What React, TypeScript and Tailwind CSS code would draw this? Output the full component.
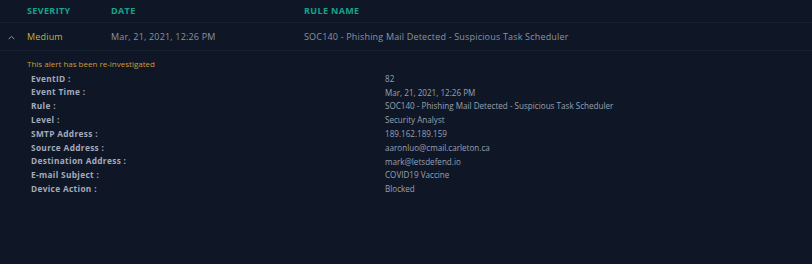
export default function App() {
  const details: [string, string][] = [
    ["EventID :", "82"],
    ["Event Time :", "Mar, 21, 2021, 12:26 PM"],
    ["Rule :", "SOC140 - Phishing Mail Detected - Suspicious Task Scheduler"],
    ["Level :", "Security Analyst"],
    ["SMTP Address :", "189.162.189.159"],
    ["Source Address :", "aaronluo@cmail.carleton.ca"],
    ["Destination Address :", "mark@letsdefend.io"],
    ["E-mail Subject :", "COVID19 Vaccine"],
    ["Device Action :", "Blocked"],
  ]

  return (
    <div className="w-[812px] h-[264px] bg-[#0f1727] font-['Open_Sans',sans-serif] overflow-hidden">
      {/* Header */}
      <div className="flex items-center h-[23px] pl-[27px] border-b border-[#18212f] text-[9px] font-bold tracking-[0.04em] text-[#13a58c]">
        <div className="w-[84px]">SEVERITY</div>
        <div className="w-[193px]">DATE</div>
        <div>RULE NAME</div>
      </div>

      {/* Row */}
      <div className="flex items-center h-[28px] pt-[1px] border-b border-[#18212f] text-[9px] tracking-[0.02em]">
        <div className="w-[27px] flex pl-[8px]">
          <svg width="7" height="5" viewBox="0 0 7 5" fill="none">
            <path d="M0.7 4.2 L3.5 1.2 L6.3 4.2" stroke="#8b93a5" strokeWidth="1" />
          </svg>
        </div>
        <div className="w-[84px] text-[#bdb43a]">Medium</div>
        <div className="w-[193px] text-[#8a92a4]">Mar, 21, 2021, 12:26 PM</div>
        <div className="text-[#8a92a4]">SOC140 - Phishing Mail Detected - Suspicious Task Scheduler</div>
      </div>

      {/* Details */}
      <div className="pl-[27px] pt-[7px]">
        <div className="text-[8px] text-[#cf9a34] leading-[12px]">This alert has been re-investigated</div>
        <div className="mt-[2px] pl-[4px]">
          {details.map(([label, value]) => (
            <div key={label} className="flex items-center h-[13.8px]">
              <div className="w-[354px] text-[8.3px] font-bold tracking-[0.04em] text-[#a3aaba]">{label}</div>
              <div className="text-[8.1px] text-[#98a0b0]">{value}</div>
            </div>
          ))}
        </div>
      </div>
    </div>
  )
}
